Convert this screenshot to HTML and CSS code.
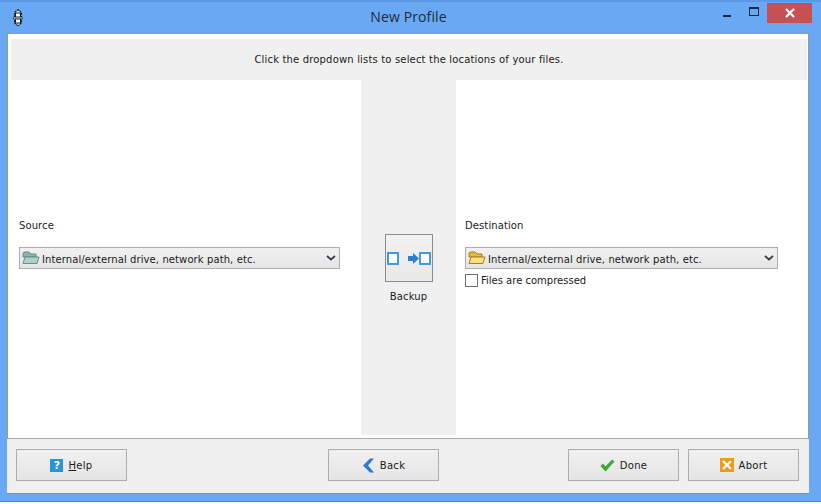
FILE: index.html
```html
<!DOCTYPE html>
<html lang="en">
<head>
<meta charset="utf-8">
<title>New Profile</title>
<link rel="stylesheet" href="styles.css">
</head>
<body>
<div class="window">
  <header class="titlebar">
    <svg class="app-icon" width="14" height="18" viewBox="0 0 14 18">
      <path d="M7 0.5 L10.5 3.5 V7.5 L11.5 9 L10.5 10.5 V14 L7 17 L3.5 14 V10.5 L2.5 9 L3.5 7.5 V3.5 Z" fill="#cfe0e6" stroke="#10202c" stroke-width="1.1" stroke-dasharray="2 .6"/>
      <rect x="4.5" y="4" width="5" height="4" fill="#fff" stroke="#10202c"/>
      <rect x="4.5" y="10" width="5" height="4" fill="#fff" stroke="#10202c"/>
    </svg>
    <h1 class="title">New Profile</h1>
    <div class="controls">
      <div class="ctl"><span class="min-glyph"></span></div>
      <div class="ctl"><span class="max-glyph"></span></div>
      <div class="close">
        <svg width="10" height="10" viewBox="0 0 10 10"><path d="M1 1 L9 9 M9 1 L1 9" stroke="#fff" stroke-width="2.2"/></svg>
      </div>
    </div>
  </header>
  <main class="client">
    <div class="hint">Click the dropdown lists to select the locations of your files.</div>
    <div class="panes">
      <section class="pane pane-left">
        <div class="label">Source</div>
        <div class="select select-left">
          <svg class="folder" width="18" height="14" viewBox="0 0 18 14">
            <path d="M1 3 Q1 1 3 1 H7 L9 3 H14 V6 H1 Z" fill="#8fb4ad" stroke="#6b8b86"/>
            <path d="M1 12.5 L3 6 H17 L15 12.5 Z" fill="#a9d2c8" stroke="#6b8b86"/>
          </svg>
          <span class="select-text">Internal/external drive, network path, etc.</span>
          <svg class="chev" width="10" height="6" viewBox="0 0 10 6"><path d="M1 1 L5 4.5 L9 1" fill="none" stroke="#3a3f47" stroke-width="1.7"/></svg>
        </div>
      </section>
      <section class="pane-mid">
        <div class="sync-btn">
          <svg width="44" height="13" viewBox="0 0 44 13">
            <rect x="1" y="1" width="10" height="11" fill="#fff" stroke="#3f9be6" stroke-width="2"/>
            <rect x="33" y="1" width="10" height="11" fill="#fff" stroke="#3f9be6" stroke-width="2"/>
            <path d="M21 4 H26 V1 L32 6.5 L26 12 V9 H21 Z" fill="#2f7fd0"/>
          </svg>
        </div>
        <div class="sync-label">Backup</div>
      </section>
      <section class="pane pane-right">
        <div class="label">Destination</div>
        <div class="select select-right">
          <svg class="folder" width="18" height="14" viewBox="0 0 18 14">
            <path d="M1 3 Q1 1 3 1 H7 L9 3 H14 V6 H1 Z" fill="#e7b93a" stroke="#a87f1e"/>
            <path d="M1 12.5 L3 6 H17 L15 12.5 Z" fill="#fbdf7c" stroke="#a87f1e"/>
          </svg>
          <span class="select-text">Internal/external drive, network path, etc.</span>
          <svg class="chev" width="10" height="6" viewBox="0 0 10 6"><path d="M1 1 L5 4.5 L9 1" fill="none" stroke="#3a3f47" stroke-width="1.7"/></svg>
        </div>
        <label class="check"><span class="box"></span>Files are compressed</label>
      </section>
    </div>
  </main>
  <footer class="footer">
    <button class="btn">
      <span class="help-icon">?</span><span class="btn-text"><u>H</u>elp</span>
    </button>
    <button class="btn btn-back">
      <svg width="13" height="15" viewBox="0 0 13 15"><path d="M8 0.5 L12 0.5 L6 7.5 L12 14.5 L8 14.5 L1 7.5 Z" fill="#2f7ad6"/></svg>
      <span class="btn-text">Back</span>
    </button>
    <div class="spacer-btns">
      <button class="btn">
        <svg width="15" height="13" viewBox="0 0 15 13"><path d="M0.5 7 L3 4.5 L5.5 7.5 L12 0.5 L14.5 2.5 L5.5 12.5 Z" fill="#3eaa35"/></svg>
        <span class="btn-text">Done</span>
      </button>
      <button class="btn">
        <span class="abort-icon"><svg width="10" height="10" viewBox="0 0 10 10"><path d="M1 1 L9 9 M9 1 L1 9" stroke="#fff" stroke-width="2.4"/></svg></span>
        <span class="btn-text">Abort</span>
      </button>
    </div>
  </footer>
</div>
</body>
</html>
```
FILE: styles.css
```css
* { box-sizing: border-box; }
html, body { margin: 0; height: 100%; background: #fff; overflow: hidden; }
body { font-family: "DejaVu Sans", sans-serif; font-size: 10px; color: #1a1a1a; }
.window {
  width: 821px; height: 502px;
  background: #69a9f4;
  border-top: 2px solid #5b97e3;
  border-bottom: 1px solid #3e80cf;
  display: flex; flex-direction: column;
  padding: 0 12px 7px 7px;
}
.titlebar { height: 31px; flex: none; display: flex; align-items: flex-start; position: relative; }
.app-icon { position: absolute; left: 4px; top: 7px; }
.title { margin: 0; flex: 1; text-align: center; font-weight: 400; font-size: 14px; letter-spacing: .12px; line-height: 30px; color: #222a36; font-family: "Open Sans", sans-serif; padding-left: 1px; }
.controls { position: absolute; right: -3px; top: 1px; display: flex; align-items: flex-start; }
.ctl { width: 27px; height: 19px; display: flex; align-items: center; justify-content: center; }
.min-glyph { width: 8px; height: 2px; background: #1a2a44; margin-top: 6px; }
.max-glyph { width: 10px; height: 9px; border: 1px solid #1a2a44; border-top-width: 2px; margin-top: -2px; }
.close { width: 45px; height: 20px; background: #c75050; display: flex; align-items: center; justify-content: center; }
.client { flex: 1; background: #fff; border: 1px solid #8f9aa8; border-bottom-color: #a9a9a9; padding: 5px 1px 3px 3px; display: flex; flex-direction: column; min-height: 0; }
.hint { height: 41px; flex: none; background: #f0f0f0; text-align: center; line-height: 42px; font-size: 10px; letter-spacing: .17px; }
.panes { flex: 1; display: flex; min-height: 0; }
.pane { background: #fff; }
.pane-left { width: 350px; padding: 140px 0 0 8px; }
.pane-right { flex: 1; padding: 140px 0 0 9px; }
.pane-mid { width: 95px; background: #f0f0f0; padding-top: 154px; display: flex; flex-direction: column; align-items: center; }
.label { height: 12px; line-height: 12px; margin-bottom: 15px; letter-spacing: .1px; }
.select { height: 22px; border: 1px solid #adadad; background: linear-gradient(#f0f0f0, #e5e5e5); display: flex; align-items: center; padding: 0 2px 0 2px; }
.select-left { width: 321px; }
.select-right { width: 313px; }
.select-text { flex: 1; margin-left: 2px; padding-top: 2px; letter-spacing: .1px; }
.chev { flex: none; margin-right: 1px; }
.folder { flex: none; }
.sync-btn { width: 48px; height: 48px; border: 1px solid #8d8d8d; background: linear-gradient(#f2f2f2, #e8e8e8); display: flex; align-items: center; justify-content: center; }
.sync-label { margin-top: 9px; letter-spacing: .15px; }
.check { display: flex; align-items: center; gap: 3px; margin-top: 5px; }
.box { width: 13px; height: 13px; border: 1px solid #707070; background: #fff; }
.footer { height: 55px; flex: none; background: #f0f0f0; border-bottom: 1px solid #7f8ea3; padding: 10px 10px 0 9px; display: flex; align-items: flex-start; }
.btn { width: 111px; height: 32px; border: 1px solid #adadad; background: linear-gradient(#f0f0f0, #e5e5e5); font: inherit; color: inherit; display: flex; align-items: center; justify-content: center; gap: 5px; padding: 0; }
.btn-text { letter-spacing: .3px; }
.btn-back { margin-left: 201px; }
.spacer-btns { margin-left: auto; display: flex; gap: 9px; }
.help-icon { width: 13px; height: 13px; background: #2a92d8; color: #fff; font-weight: 700; font-size: 11px; line-height: 13px; text-align: center; }
.abort-icon { width: 14px; height: 14px; background: #f5971d; display: flex; align-items: center; justify-content: center; }
```
